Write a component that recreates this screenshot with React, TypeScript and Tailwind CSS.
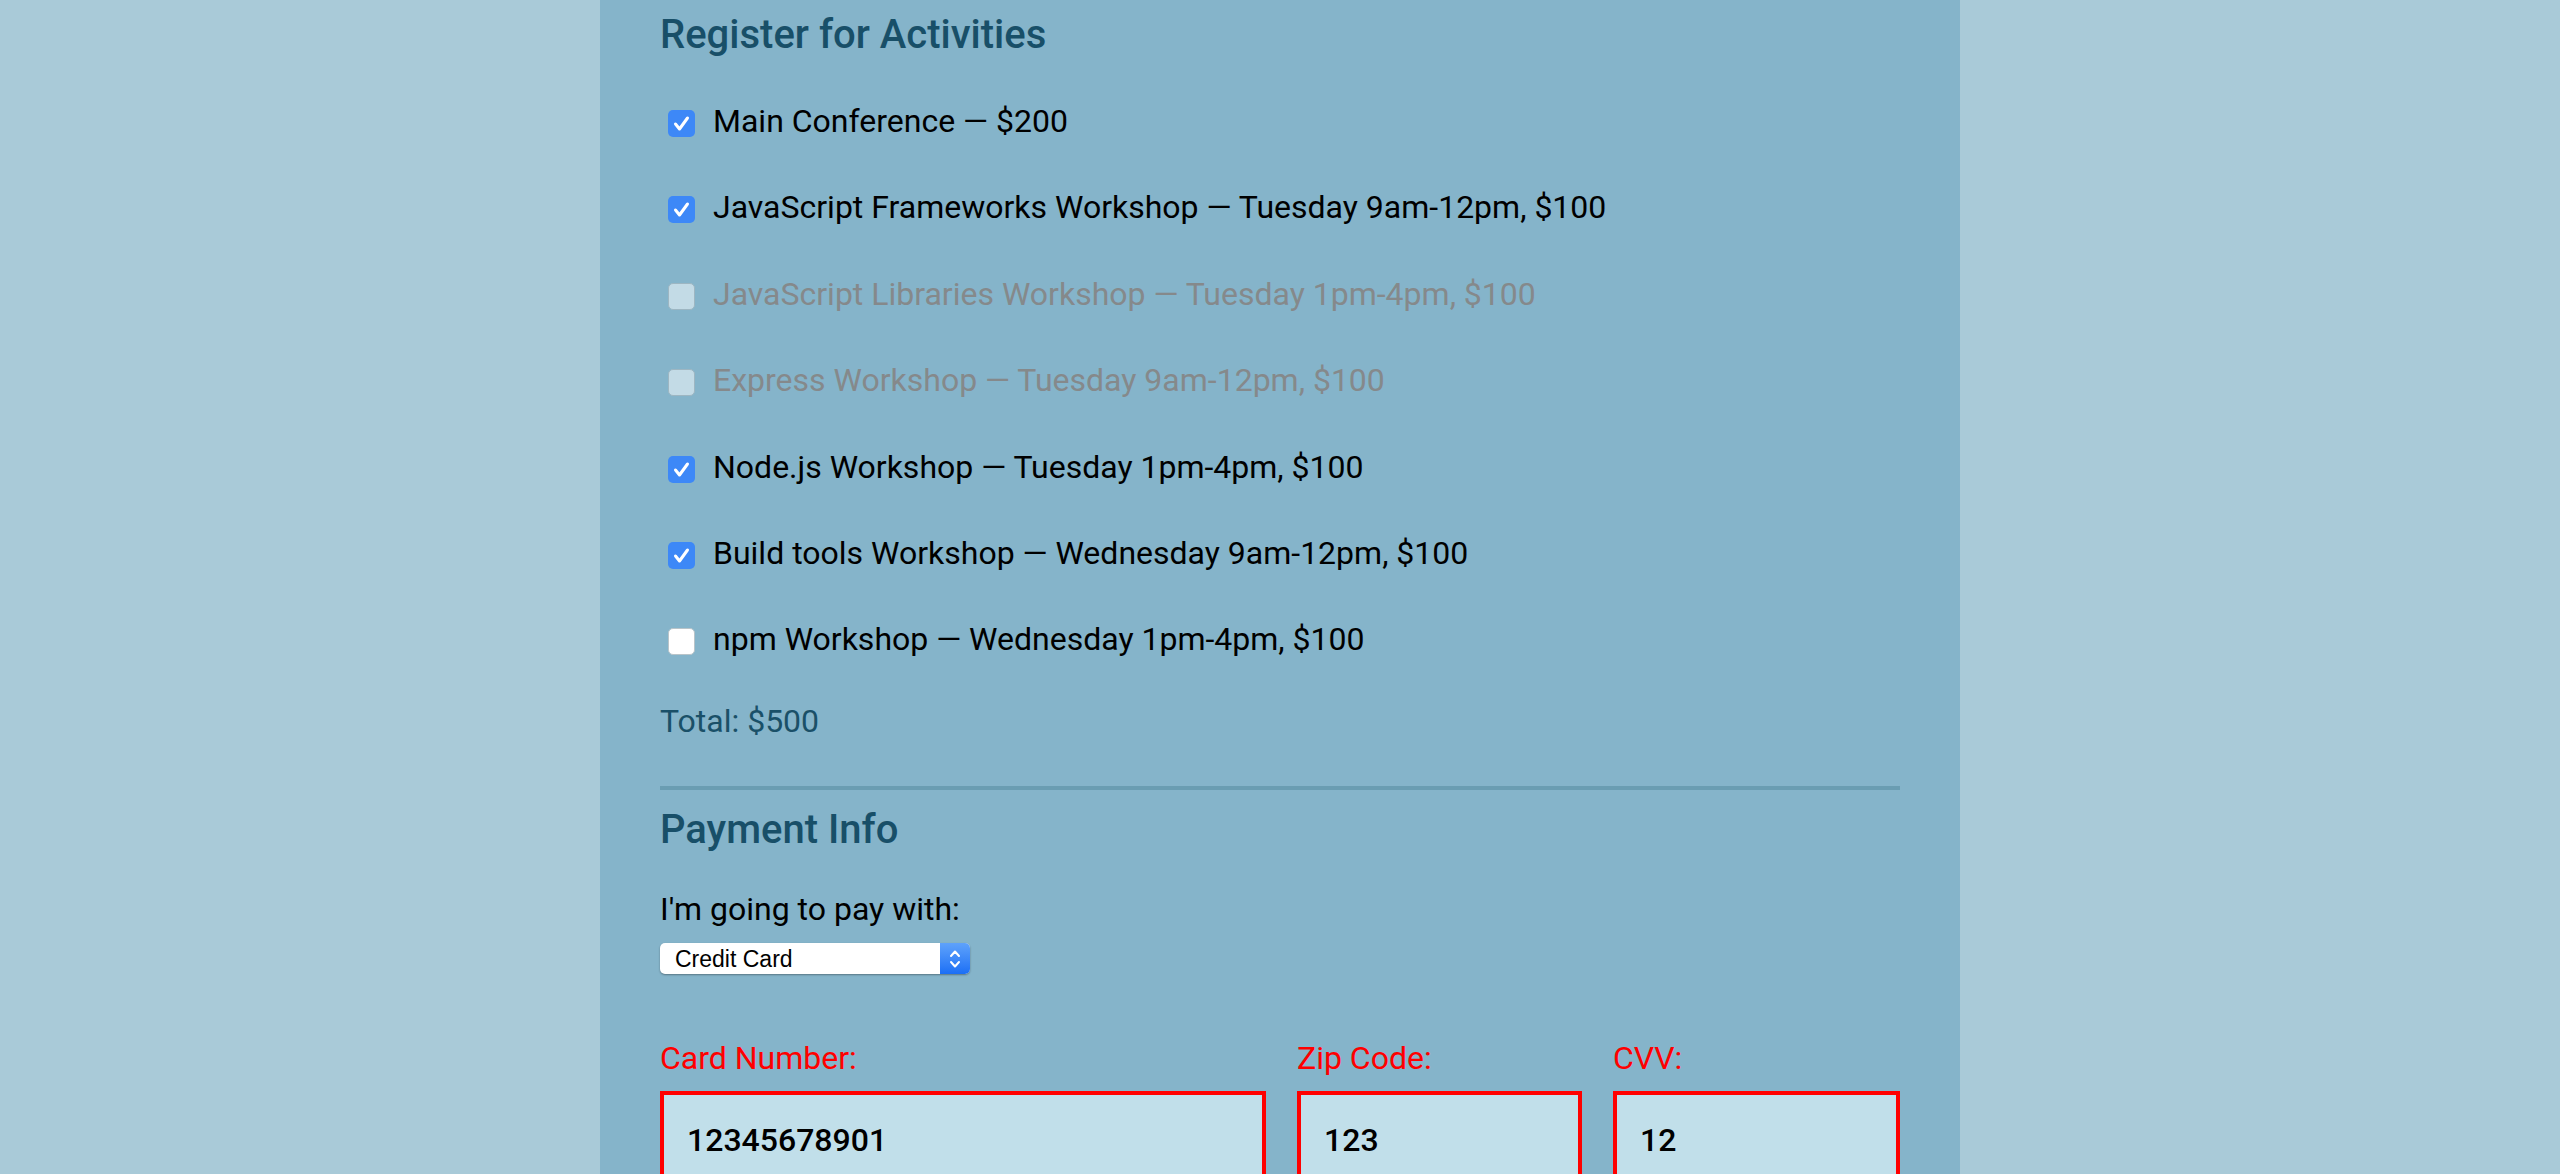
import React from "react";

type Activity = {
    name: string;
    checked: boolean;
    disabled: boolean;
};

const activities: Activity[] = [
    { name: "Main Conference \u2014 $200", checked: true, disabled: false },
    { name: "JavaScript Frameworks Workshop \u2014 Tuesday 9am-12pm, $100", checked: true, disabled: false },
    { name: "JavaScript Libraries Workshop \u2014 Tuesday 1pm-4pm, $100", checked: false, disabled: true },
    { name: "Express Workshop \u2014 Tuesday 9am-12pm, $100", checked: false, disabled: true },
    { name: "Node.js Workshop \u2014 Tuesday 1pm-4pm, $100", checked: true, disabled: false },
    { name: "Build tools Workshop \u2014 Wednesday 9am-12pm, $100", checked: true, disabled: false },
    { name: "npm Workshop \u2014 Wednesday 1pm-4pm, $100", checked: false, disabled: false },
];

const Box = ({ checked, disabled }: { checked: boolean; disabled: boolean }) => {
    if (checked) {
        return (
            <span className="flex h-[27px] w-[27px] shrink-0 items-center justify-center rounded-[5px] bg-[#3d88f7]">
                <svg width="27" height="27" viewBox="0 0 27 27">
                    <polyline points="7.5,14 11.5,19 19.5,8" fill="none" stroke="white" strokeWidth="3" strokeLinecap="round" strokeLinejoin="round" />
                </svg>
            </span>
        );
    }
    if (disabled) {
        return <span className="block h-[27px] w-[27px] shrink-0 rounded-[5px] border border-[#9db6c2] bg-[#c3dbe6]" />;
    }
    return <span className="block h-[27px] w-[27px] shrink-0 rounded-[5px] border border-[#b9c4c9] bg-white" />;
};

const Field = ({ label, value }: { label: string; value: string }) => (
    <div className="flex flex-col">
        <label className="text-[32px] leading-[40px] text-[#ff0000]">{label}</label>
        <div className="mt-[13px] flex h-[98px] items-center border-[4px] border-[#ff0000] bg-[#c1dfea] pl-[23px] text-[32px] font-medium text-black">
            {value}
        </div>
    </div>
);

const App = () => {
    return (
        <div className="flex min-h-screen justify-center bg-[#a9cad8] font-['Roboto',sans-serif]">
            <div className="w-[1360px] bg-[#85b4ca] px-[60px] pb-[40px]">
                <h2 className="pt-[11px] text-[40px] font-medium leading-[48px] text-[#184f68]">Register for Activities</h2>

                <div className="mt-[42px] flex flex-col gap-[46.4px]">
                    {activities.map((a) => (
                        <div key={a.name} className="flex items-center pl-[8px]">
                            <span className="mt-[5px] block">
                                <Box checked={a.checked} disabled={a.disabled} />
                            </span>
                            <span className={`ml-[18px] text-[32px] leading-[40px] ${a.disabled ? "text-[#85898b]" : "text-black"}`}>
                                {a.name}
                            </span>
                        </div>
                    ))}
                </div>

                <p className="mt-[42px] text-[32px] leading-[40px] text-[#1a5068]">Total: $500</p>

                <hr className="mt-[45px] h-[4px] border-0 bg-[#6a9db2]" />

                <h2 className="mt-[16px] text-[40px] font-medium leading-[48px] text-[#184f68]">Payment Info</h2>

                <p className="mt-[35px] text-[32px] leading-[40px] text-black">I'm going to pay with:</p>

                <div className="mt-[14px] flex h-[31px] w-[310px] items-stretch rounded-[5px] bg-white shadow-[0_1px_2px_rgba(0,0,0,0.35)]">
                    <span className="flex flex-1 items-center pl-[15px] font-['Liberation_Sans',sans-serif] text-[23px] text-black">Credit Card</span>
                    <span className="flex w-[30px] items-center justify-center rounded-r-[5px] bg-gradient-to-b from-[#5ea2fb] to-[#1b6ff5]">
                        <svg width="14" height="24" viewBox="0 0 14 24">
                            <polyline points="3,9 7,4.5 11,9" fill="none" stroke="white" strokeWidth="2" strokeLinecap="round" strokeLinejoin="round" />
                            <polyline points="3,15 7,19.5 11,15" fill="none" stroke="white" strokeWidth="2" strokeLinecap="round" strokeLinejoin="round" />
                        </svg>
                    </span>
                </div>

                <div className="mt-[64px] grid grid-cols-[606px_285px_1fr] gap-x-[31px]">
                    <Field label="Card Number:" value="12345678901" />
                    <Field label="Zip Code:" value="123" />
                    <Field label="CVV:" value="12" />
                </div>
            </div>
        </div>
    );
};

export default App;
